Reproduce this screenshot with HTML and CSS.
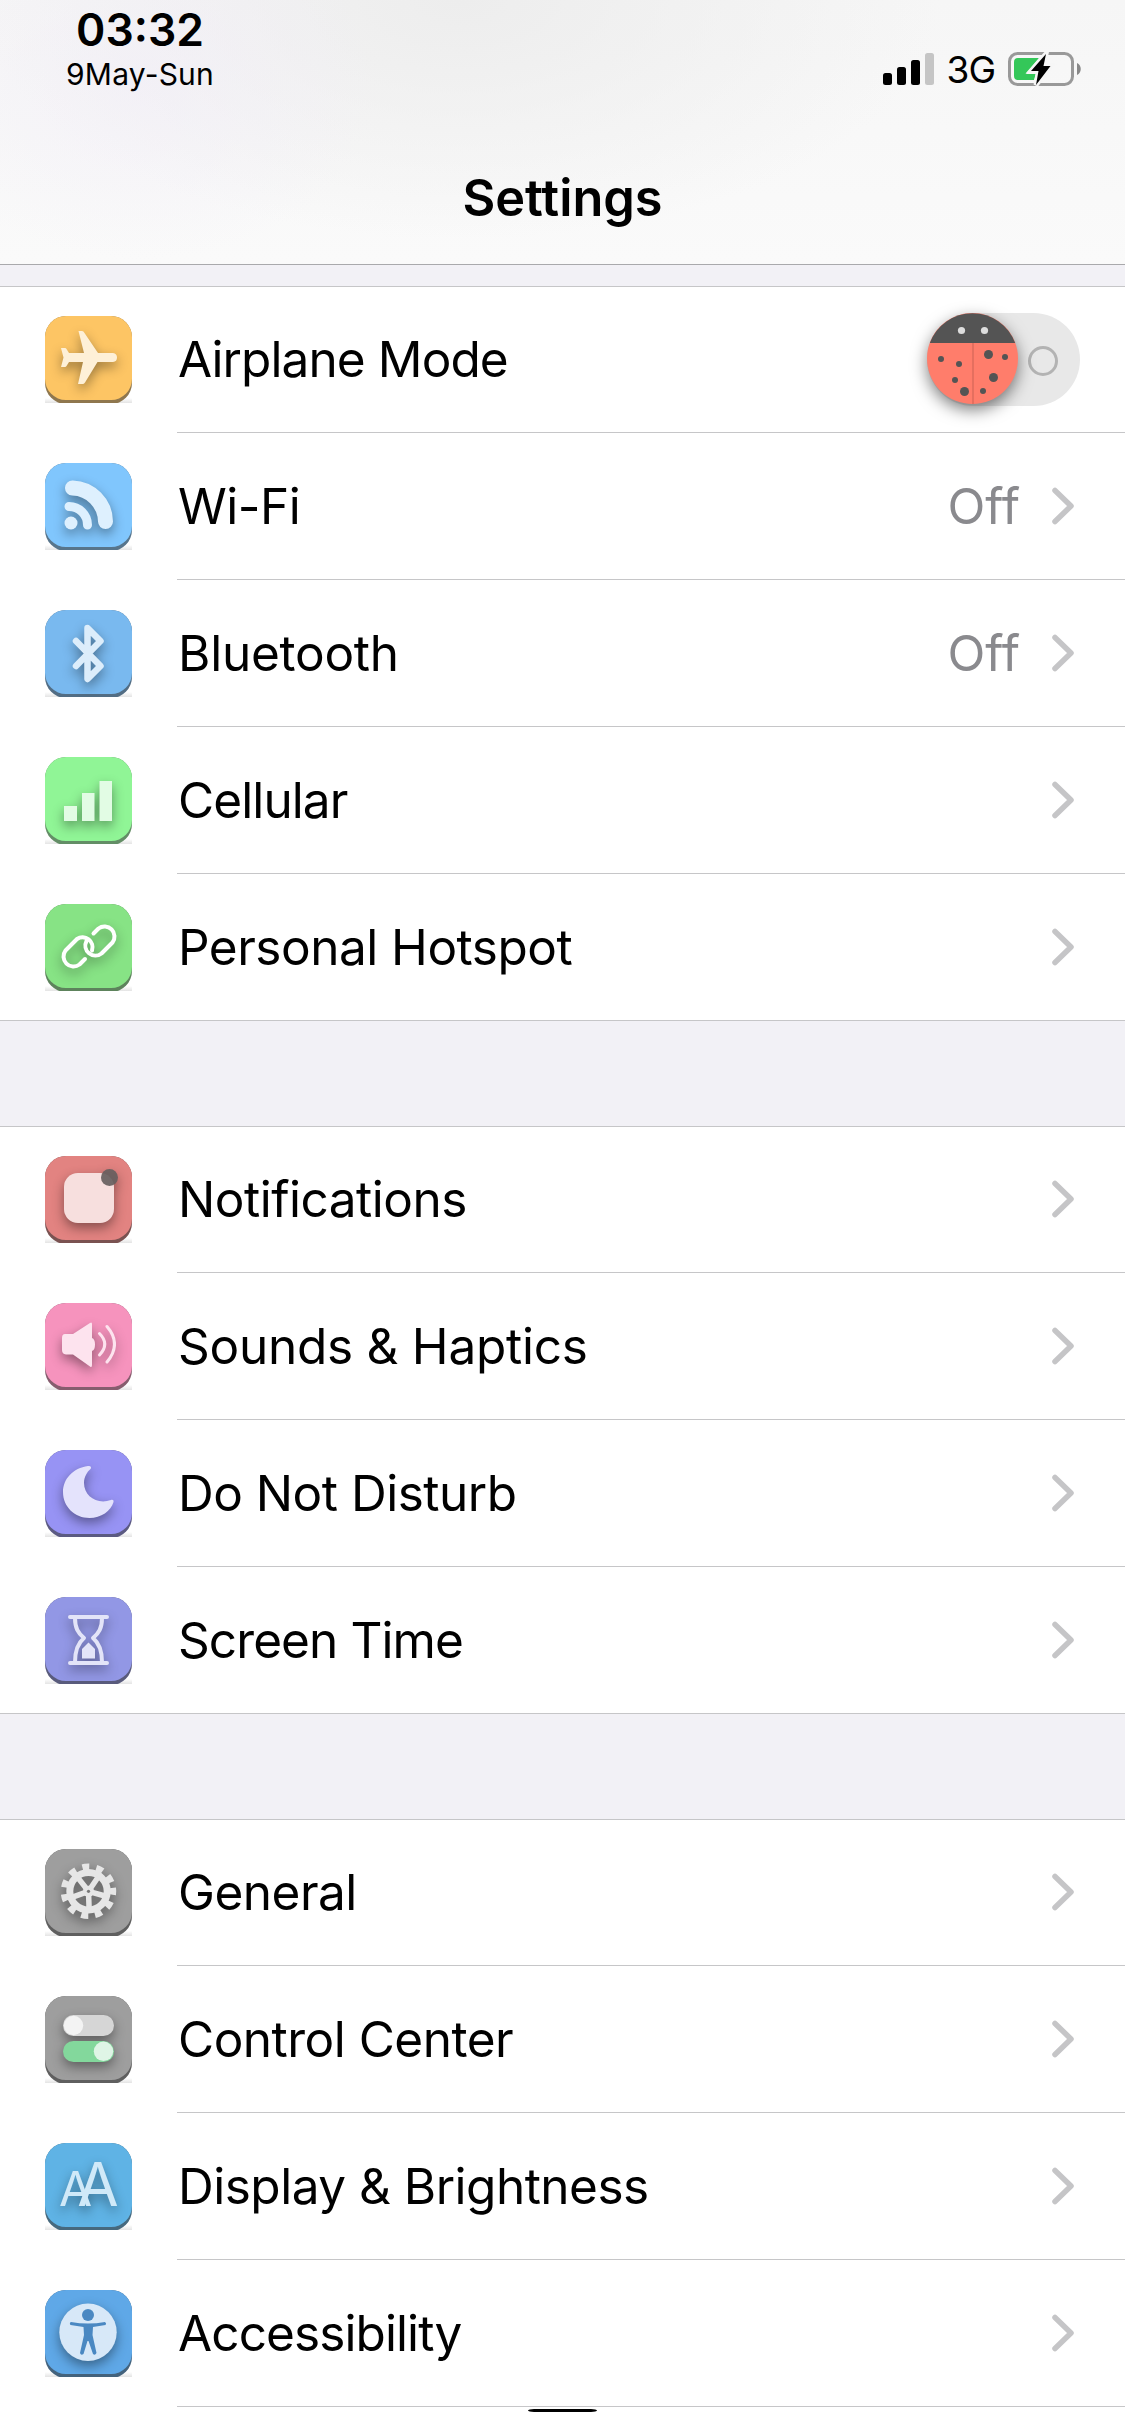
FILE: index.html
```
<!DOCTYPE html>
<html lang="en">
<head>
  <meta charset="UTF-8">
  <title>Settings</title>
  <link rel="stylesheet" href="styles.css">
</head>
<body>

<header class="header">
  <div class="status-bar">
    <div class="clock">
      <div class="time">03:32</div>
      <div class="date">9May-Sun</div>
    </div>
    <div class="status-icons">
      <svg class="signal" width="51" height="34" viewBox="0 0 51 34">
        <rect x="0" y="21" width="9" height="12" rx="2.5"/>
        <rect x="14" y="15" width="9" height="18" rx="2.5"/>
        <rect x="28" y="8" width="9" height="25" rx="2.5"/>
        <rect x="42" y="1" width="9" height="32" rx="2.5" fill="#c5c5c5"/>
      </svg>
      <span class="network">3G</span>
      <svg class="battery" width="74" height="34" viewBox="0 0 74 34">
        <rect x="1.5" y="1.5" width="63" height="31" rx="8" fill="none" stroke="#999" stroke-width="3"/>
        <path d="M69 11c5 2 5 10 0 12z" fill="#888"/>
        <path d="M10 6H31L18 22H28L26 28H10Q6 28 6 24V10Q6 6 10 6z" fill="#34c759"/>
        <path d="M38 2L23 19H30.5L28 33L42.5 14H35.5z" stroke="#f6f6f6" stroke-width="5"/>
        <path d="M38 2L23 19H30.5L28 33L42.5 14H35.5z"/>
      </svg>
    </div>
  </div>
  <h1 class="title">Settings</h1>
</header>

<main>
  <!-- Connectivity -->
  <section class="group">
    <div class="row">
      <div class="icon airplane">
        <svg viewBox="0 0 87 87"><path d="M33.5 15H37Q38.5 15 39.5 17L53 37H68Q72 37.5 72 41.5T68 46H52.5L40 66.5Q39 68 37.5 68H33L38 46H24L21.5 50Q21 51 20 51H16L18.5 41.5L16 32H20Q21 32 21.5 33L24 37H39z"/></svg>
      </div>
      <div class="cell"><span class="label tight">Airplane Mode</span>
        <svg class="toggle" width="153" height="93" viewBox="0 0 153 93">
          <rect width="153" height="93" rx="46.5" fill="#e8e8e8"/>
          <circle cx="116" cy="48" r="13.5" fill="none" stroke="#b3b3b3" stroke-width="3"/>
          <g class="knob">
            <circle cx="45.5" cy="45.5" r="45.5" fill="#ff7d6b"/>
            <path d="M2.8 30A45.5 45.5 0 0 1 88.2 30z" fill="#545454"/>
          </g>
          <path d="M46 30V91" stroke="#e56f5f" stroke-width="2"/>
          <g fill="#ddd"><circle cx="34.5" cy="17.5" r="3.6"/><circle cx="57.5" cy="17.5" r="3.6"/></g>
          <g fill="#545454">
            <circle cx="14" cy="46" r="3"/><circle cx="32" cy="51" r="3"/><circle cx="28" cy="67" r="3"/>
            <circle cx="37.5" cy="78.5" r="4.5"/><circle cx="56" cy="78" r="3"/>
            <circle cx="61.5" cy="41.5" r="4.5"/><circle cx="78" cy="44" r="3"/><circle cx="66.5" cy="64.5" r="4.5"/>
          </g>
        </svg>
      </div>
    </div>
    <div class="row">
      <div class="icon wifi">
        <svg viewBox="0 0 87 87"><g class="line"><path d="M27.5 25A34 34 0 0 1 60.5 58.5" stroke-width="15"/><path d="M24 43.5A18.5 18.5 0 0 1 42.5 62" stroke-width="9"/></g><circle cx="26" cy="60" r="6.5"/></svg>
      </div>
      <div class="cell"><span class="label">Wi-Fi</span><span class="value">Off</span><svg class="chevron" viewBox="0 0 22 38"><path d="M3 3.5L19 19L3 34.5"/></svg></div>
    </div>
    <div class="row">
      <div class="icon bluetooth">
        <svg viewBox="0 0 87 87"><path class="line" stroke-width="6.5" d="M31 31L55.5 56L42.5 69V18L55.5 31L31 56"/></svg>
      </div>
      <div class="cell"><span class="label wide">Bluetooth</span><span class="value">Off</span><svg class="chevron" viewBox="0 0 22 38"><path d="M3 3.5L19 19L3 34.5"/></svg></div>
    </div>
    <div class="row">
      <div class="icon cellular">
        <svg viewBox="0 0 87 87"><path d="M19 49H32V64H19zM37 36H49.5V64H37zM54.5 24H67V64H54.5z"/></svg>
      </div>
      <div class="cell"><span class="label tight">Cellular</span><svg class="chevron" viewBox="0 0 22 38"><path d="M3 3.5L19 19L3 34.5"/></svg></div>
    </div>
    <div class="row">
      <div class="icon hotspot">
        <svg viewBox="0 0 87 87"><g class="line" stroke-width="4"><path d="M48.5 29.5L53.5 24.5A10 10 0 0 1 67.5 38.5L56.5 49.5A10 10 0 0 1 41.5 37"/><path d="M40 55L34.5 60.5A10 10 0 0 1 20.5 46.5L32 35A10 10 0 0 1 47 46.5"/></g></svg>
      </div>
      <div class="cell"><span class="label">Personal Hotspot</span><svg class="chevron" viewBox="0 0 22 38"><path d="M3 3.5L19 19L3 34.5"/></svg></div>
    </div>
  </section>

  <!-- Alerts and focus -->
  <section class="group">
    <div class="row">
      <div class="icon notifications">
        <svg viewBox="0 0 87 87"><rect x="19" y="17" width="50" height="50" rx="14"/><circle cx="64.5" cy="21.5" r="8.5" fill="#665e5e" fill-opacity=".92"/></svg>
      </div>
      <div class="cell"><span class="label">Notifications</span><svg class="chevron" viewBox="0 0 22 38"><path d="M3 3.5L19 19L3 34.5"/></svg></div>
    </div>
    <div class="row">
      <div class="icon sounds">
        <svg viewBox="0 0 87 87"><path d="M20 31H28L45 20Q47 18.5 47 21V35Q50 36 50 41.5T47 48V62Q47 65 45 63.5L28 51.5H21Q17 51 17 47V35Q17 31 20 31z"/><g class="line" stroke-width="3"><path d="M54.5 30.5Q65 41 54.5 52"/><path d="M62 23.5Q77 41 62 59"/></g></svg>
      </div>
      <div class="cell"><span class="label wide">Sounds &amp; Haptics</span><svg class="chevron" viewBox="0 0 22 38"><path d="M3 3.5L19 19L3 34.5"/></svg></div>
    </div>
    <div class="row">
      <div class="icon dnd">
        <svg viewBox="0 0 87 87"><path d="M43 16C28 18 18 29 18 42C18 57 30 68 44.5 68C56 68 66 61 68.5 52C69 50 67.5 49.5 66 50C52 55 39 46 39 33C39 27 42 22 45.5 19C47 17 45.5 15.5 43 16z"/></svg>
      </div>
      <div class="cell"><span class="label">Do Not Disturb</span><svg class="chevron" viewBox="0 0 22 38"><path d="M3 3.5L19 19L3 34.5"/></svg></div>
    </div>
    <div class="row">
      <div class="icon screen-time">
        <svg viewBox="0 0 87 87"><path class="line" stroke-width="4" d="M25 20H62M25 66H62M30 21C30 31 33 36 39 41C33 46 30 53 30 65M57 21C57 31 54 36 48 41C54 46 57 53 57 65"/><path d="M37 61.5V52L43.5 45.5L50 52V61.5z"/></svg>
      </div>
      <div class="cell"><span class="label tight">Screen Time</span><svg class="chevron" viewBox="0 0 22 38"><path d="M3 3.5L19 19L3 34.5"/></svg></div>
    </div>
  </section>

  <!-- Device -->
  <section class="group">
    <div class="row">
      <div class="icon general">
        <svg viewBox="0 0 87 87">
          <g fill="none" stroke="#e6e6e6">
            <circle cx="43.5" cy="42.3" r="18.7" stroke-width="7"/>
            <circle cx="43.5" cy="42.3" r="24.5" stroke-width="6.5" stroke-dasharray="7 6.994" transform="rotate(-8 43.5 42.3)"/>
            <path stroke-width="5.5" d="M43.5 42.3L44.1 59.3M43.5 42.3L27.5 48.1M43.5 42.3L33 28.9M43.5 42.3L53 28.3M43.5 42.3L60 47"/>
          </g>
          <circle cx="43.5" cy="42.3" r="5.5" fill="#e6e6e6"/>
          <circle cx="43.5" cy="42.3" r="1.6" fill="#777"/>
        </svg>
      </div>
      <div class="cell"><span class="label">General</span><svg class="chevron" viewBox="0 0 22 38"><path d="M3 3.5L19 19L3 34.5"/></svg></div>
    </div>
    <div class="row">
      <div class="icon control-center">
        <svg viewBox="0 0 87 87">
          <rect x="18" y="19" width="51" height="21" rx="10.5" fill="#d6d6d6"/>
          <rect x="18" y="45" width="51" height="21" rx="10.5" fill="#83d89c"/>
          <circle cx="28.5" cy="29.5" r="9.7" fill="#f3f3f3"/>
          <circle cx="58.5" cy="55.3" r="9.7" fill="#dff5e6"/>
        </svg>
      </div>
      <div class="cell"><span class="label">Control Center</span><svg class="chevron" viewBox="0 0 22 38"><path d="M3 3.5L19 19L3 34.5"/></svg></div>
    </div>
    <div class="row">
      <div class="icon display">
        <svg viewBox="0 0 87 87">
          <text x="14" y="63"><tspan font-size="48">A</tspan><tspan font-size="60" dx="-15">A</tspan></text>
        </svg>
      </div>
      <div class="cell"><span class="label">Display &amp; Brightness</span><svg class="chevron" viewBox="0 0 22 38"><path d="M3 3.5L19 19L3 34.5"/></svg></div>
    </div>
    <div class="row">
      <div class="icon accessibility">
        <svg viewBox="0 0 87 87"><circle cx="43" cy="42.3" r="28.7" fill="#d7e8f8"/><g fill="#4a88c2"><circle cx="43" cy="25" r="6"/><path d="M26 32Q43 35 60 32Q62 33.5 60.5 35L48 37L47.5 45L51.5 63Q50 66 48 64L43.5 51H42.5L38.5 64Q36 66 35 63L39 45L38.5 37L25.5 35Q24 33 26 32z"/></g></svg>
      </div>
      <div class="cell"><span class="label tight">Accessibility</span><svg class="chevron" viewBox="0 0 22 38"><path d="M3 3.5L19 19L3 34.5"/></svg></div>
    </div>
  </section>
</main>

<div class="home-indicator"></div>

</body>
</html>
```
FILE: styles.css
```
* {
  box-sizing: border-box;
}

body {
  margin: 0;
  height: 2436px;
  overflow: hidden;
  position: relative;
  font-family: Inter, 'Liberation Sans', sans-serif;
  color: #000;
  background: #fff;
}

.header {
  height: 265px;
  border-bottom: 1px solid #a9a9ac;
  background:
    radial-gradient(ellipse 240px 180px at 140px 80px, rgba(241, 237, 247, 0.6), transparent),
    radial-gradient(ellipse 480px 240px at 460px 0, #ededed, transparent),
    linear-gradient(#f6f6f6, #fafafa);
}

.status-bar {
  display: flex;
  justify-content: space-between;
  height: 159px;
  padding: 6px 43px 0 60px;
}

.clock {
  width: 160px;
  text-align: center;
  white-space: nowrap;
}

.time {
  font-size: 44.5px;
  font-weight: 600;
  line-height: 48px;
}

.date {
  font-size: 30px;
  line-height: 36px;
  letter-spacing: 0.2px;
  margin-top: 2px;
}

.status-icons {
  display: flex;
  align-items: center;
  height: 34px;
  margin-top: 46px;
}

.network {
  font-size: 37px;
  line-height: 34px;
  margin: 2px 13px 0 13px;
  letter-spacing: -1px;
}

.title {
  margin: 0;
  text-align: center;
  font-size: 50.5px;
  font-weight: 600;
  line-height: 78px;
}

main {
  padding-top: 21px;
  background: #f2f1f6;
}

.group {
  margin-bottom: 105px;
  border-top: 1px solid #c6c6c8;
  background: #fff;
}

.group:last-child {
  margin-bottom: 0;
}

.row {
  display: flex;
  align-items: center;
  height: 147px;
  padding: 1px 0 0 45px;
}

.row:first-child {
  height: 146px;
  padding-top: 0;
}

.row:last-child {
  border-bottom: 1px solid #c6c6c8;
}

.group:last-child .row:last-child {
  border-bottom: none;
}

.cell {
  flex: 1;
  align-self: stretch;
  display: flex;
  align-items: center;
  margin-left: 45px;
  padding: 0 51px 1px 1px;
  border-bottom: 1px solid #c6c6c8;
}

.row:last-child .cell {
  border-bottom: none;
}

.group:last-child .row:last-child .cell {
  border-bottom: 1px solid #c6c6c8;
}

.label {
  flex: 1;
  font-size: 49.5px;
  line-height: 60px;
  letter-spacing: -0.5px;
}

.label.tight {
  letter-spacing: -0.9px;
}

.label.wide {
  letter-spacing: -0.25px;
}

.value {
  font-size: 49.5px;
  color: #8a8a8e;
  margin-right: 32px;
}

.chevron {
  width: 22px;
  height: 38px;
  fill: none;
  stroke: #c5c5c7;
  stroke-width: 5.5;
  stroke-linecap: round;
  stroke-linejoin: round;
}

.toggle {
  overflow: visible;
  margin-right: -6px;
}

.knob {
  filter: drop-shadow(0 6px 8px rgba(0, 0, 0, 0.5));
}

/* App icons: raised plate with a dark lip under it */
.icon {
  position: relative;
  width: 87px;
  height: 87px;
  margin-bottom: 1px;
  overflow: hidden;
  background: linear-gradient(transparent 82px, #e4e4e4);
}

.icon::before,
.icon::after {
  content: "";
  position: absolute;
  left: 0;
  top: 0;
  width: 87px;
  height: 84px;
  border-radius: 21px;
  background: var(--color);
}

.icon::before {
  height: 88px;
  filter: brightness(0.6) saturate(0.7);
}

.icon svg {
  --glyph: color-mix(in srgb, #fff 74%, var(--color));
  position: absolute;
  z-index: 1;
  width: 87px;
  height: 87px;
  fill: var(--glyph);
  filter: drop-shadow(0 5px 6px rgba(0, 0, 0, 0.4));
}

.icon .line {
  fill: none;
  stroke: var(--glyph);
  stroke-linecap: round;
  stroke-linejoin: round;
}

.icon.hotspot .line {
  stroke: #fff;
}

.display text {
  font-family: Inter, sans-serif;
  font-weight: 400;
  fill: #d0e9f8;
}

.airplane { --color: #fdc564; }
.wifi { --color: #80c6fd; }
.bluetooth { --color: #79b9ef; }
.cellular { --color: #90f596; }
.hotspot { --color: #87e385; }
.notifications { --color: #e28381; }
.sounds { --color: #f693bd; }
.dnd { --color: #9793f4; }
.screen-time { --color: #9297e5; }
.general { --color: #9e9e9e; }
.control-center { --color: #9e9e9e; }
.display { --color: #5fb3e5; }
.accessibility { --color: #5fa8e7; }

.home-indicator {
  position: absolute;
  left: 528px;
  top: 2409px;
  width: 69px;
  height: 3px;
  border-radius: 8px / 2px;
  background: #000;
}
```
